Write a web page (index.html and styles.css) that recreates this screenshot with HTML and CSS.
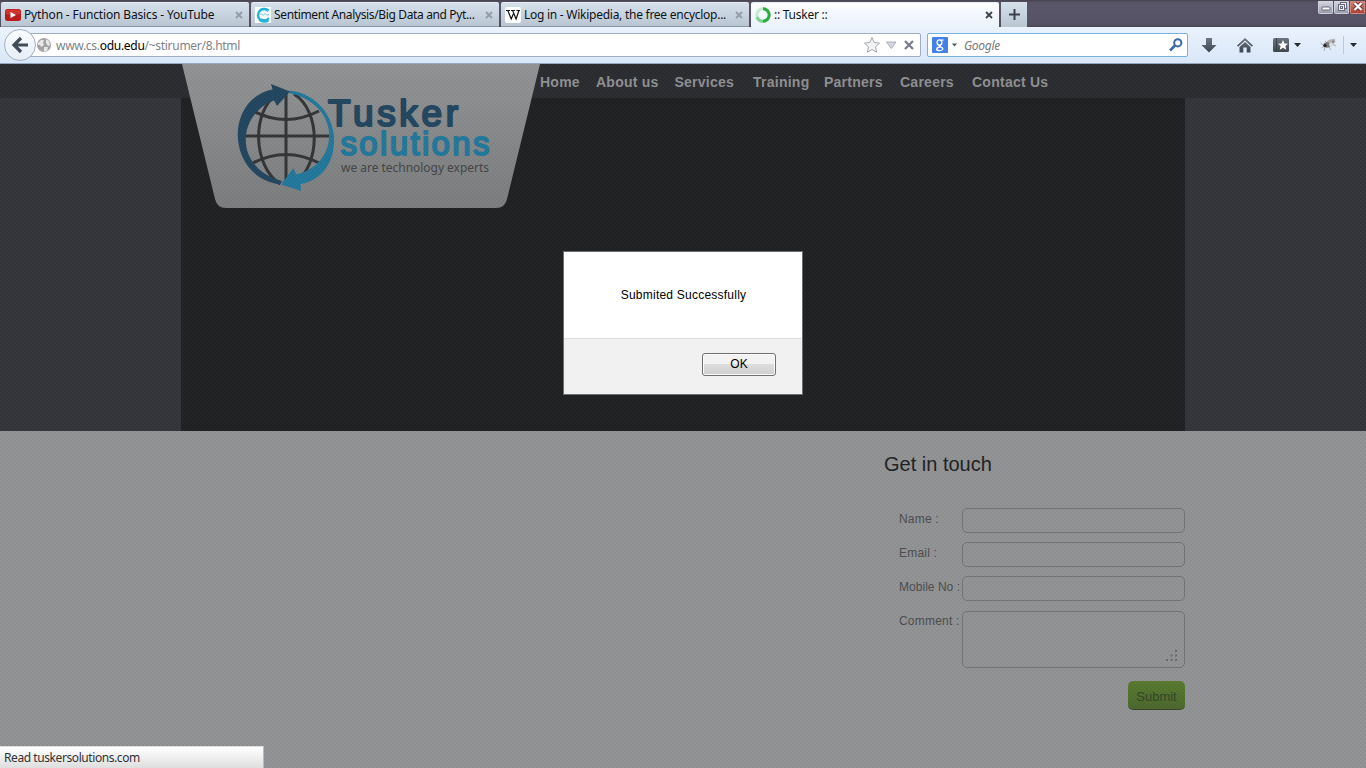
FILE: index.html
```html
<!DOCTYPE html>
<html lang="en">
<head>
<meta charset="utf-8">
<title>:: Tusker ::</title>
<link rel="stylesheet" href="styles.css">
</head>
<body>
<div class="browser">
  <div class="tabs">
    <div class="tab">
      <svg class="fav" width="16" height="16"><rect y="2" width="16" height="12" rx="2.5" fill="#b81c1c"/><rect x=".5" y="2.5" width="15" height="5" rx="2" fill="#cf3431"/><path d="M5.5 5v6l5.5-3z" fill="#fff"/></svg>
      <span class="title t1">Python - Function Basics - YouTube</span>
      <svg class="x" width="8" height="8"><path d="M1 1l6 6M7 1L1 7"/></svg>
    </div>
    <div class="tab">
      <svg class="fav" width="16" height="16"><rect width="16" height="16" fill="#fff"/><path d="M13.500 3.500A6.300 6.300 0 1 0 13.500 13" fill="none" stroke="#20b3d8" stroke-width="2.500"/><path d="M5 3q4-3 8 1" fill="none" stroke="#20b3d8" stroke-width="2"/><path d="M5 7.500c2-2 2 2 4 0s2 2 5 0" fill="none" stroke="#55bfd5"/><path d="M6 12q4 3 8-1" fill="none" stroke="#20b3d8" stroke-width="2"/></svg>
      <span class="title t2">Sentiment Analysis/Big Data and Pyt...</span>
      <svg class="x" width="8" height="8"><path d="M1 1l6 6M7 1L1 7"/></svg>
    </div>
    <div class="tab">
      <svg class="fav" width="16" height="16"><rect width="16" height="16" rx="2" fill="#fff"/><path d="M1 3.500h4M6 3.500h4M11.500 3.500h3.500M3 4l3.200 8L8.300 7M7.800 4l3.300 8 2.600-8" fill="none" stroke="#111" stroke-width="1.200"/></svg>
      <span class="title t3">Log in - Wikipedia, the free encyclop...</span>
      <svg class="x" width="8" height="8"><path d="M1 1l6 6M7 1L1 7"/></svg>
    </div>
    <div class="tab active">
      <svg class="fav" width="16" height="16" fill="none" stroke-width="3"><circle cx="8" cy="8" r="6.200" stroke="#c6ead0"/><path d="M2 10A6.200 6.200 0 0 0 8 14.200" stroke="#80d292"/><path d="M8 1.800A6.200 6.200 0 0 1 8 14.200" stroke="#28ae3a"/></svg>
      <span class="title t4">:: Tusker ::</span>
      <svg class="x" width="8" height="8"><path d="M1 1l6 6M7 1L1 7"/></svg>
    </div>
    <div class="newtab"><svg width="11" height="11"><path d="M5.500 0v11M0 5.500h11" stroke="#3b4049" stroke-width="2"/></svg></div>
    <div class="winbtns">
      <span class="wb"><svg width="14" height="12"><rect x="3" y="6" width="8" height="3" rx="1" fill="#fff" stroke="#66697c"/></svg></span>
      <span class="wb"><svg width="14" height="12" fill="#eee" stroke="#66697c"><rect x="5.500" y="1.500" width="6" height="6"/><rect x="3.500" y="3.500" width="6" height="6"/><rect x="5.500" y="5.500" width="2" height="2"/></svg></span>
      <span class="wb close"><svg width="14" height="12"><path d="M3.500 2l7 7M10.500 2l-7 7" stroke="#6b3038" stroke-width="4"/><path d="M3.500 2l7 7M10.500 2l-7 7" stroke="#fff" stroke-width="2.300"/></svg></span>
    </div>
  </div>
  <div class="toolbar">
    <div class="back"><svg width="18" height="18" fill="none" stroke="#414c58" stroke-width="3.200"><path d="M17 9H3.500M10 2L3 9l7 7"/></svg></div>
    <div class="url">
      <svg width="14" height="14"><circle cx="7" cy="7" r="7" fill="#a2a2a2"/><path d="M1 5l3-3 3 0-1 3 1 2-3 2-1-2-2 0zM9 1l3 2 1 4-2 1-2-3zM7 9l4 0-1 4-3 1z" fill="#e7e7e7"/></svg>
      <span class="addr">www.cs.<b>odu.edu</b>/~stirumer/8.html</span>
      <svg class="urlicons" width="56" height="18"><path d="M9 1.500l2.200 5 5.300.6-4 3.700 1.100 5.400L9 13.500l-4.600 2.700 1.100-5.400-4-3.700 5.300-.6z" fill="#f4f4f4" stroke="#a1a6ac"/><path d="M23.500 6h9.500l-4.750 6.500z" fill="#d4d8e0" stroke="#9aa0ab" stroke-width=".8"/><path d="M42 5l8 8M50 5l-8 8" stroke="#747c87" stroke-width="2.200"/></svg>
    </div>
    <div class="search">
      <svg width="27" height="16"><rect width="16" height="16" rx="1" fill="#4580e8"/><g fill="none" stroke="#fff" stroke-width="1.300"><ellipse cx="7.500" cy="5.500" rx="2.400" ry="2.700"/><path d="M9 3.300l2.500-.4M8.500 8q-2 1 .5 2t1.500 2.500q-1 1.500-4 1T5 11.500Q5.500 10 8.500 10"/></g><path d="M20 6.500h5l-2.500 3z" fill="#555"/></svg>
      <span class="hint">Google</span>
      <svg class="lens" width="14" height="14" fill="none" stroke="#386ba6"><circle cx="8.800" cy="4.800" r="3.600" stroke-width="2"/><path d="M6 7.500L1 12.500" stroke-width="2.500"/></svg>
    </div>
    <svg class="tools" width="178" height="34" viewBox="1188 28 178 34">
      <defs><linearGradient id="steel" x2="0" y2="1"><stop stop-color="#6c7680"/><stop offset="1" stop-color="#3e4751"/></linearGradient></defs>
      <g fill="url(#steel)"><path d="M1206 38h6v7h4.500l-7.500 7.500-7.500-7.500h4.500z"/><path d="M1237 45.500l8-7.500 8 7.500-1.200 1.200L1245 40.500l-6.800 6.200zM1239.500 47l5.500-5 5.500 5v5.500h-3.800v-5h-3.400v5h-3.800z"/><rect x="1273" y="38" width="16" height="14" rx="1.500"/></g>
      <path d="M1276.500 38v14" stroke="#38424b"/><path d="M1283 40l1.500 3.400 3.500.4-2.600 2.300.8 3.600-3.200-1.900-3.200 1.900.8-3.600-2.600-2.300 3.500-.4z" fill="#fff"/>
      <path d="M1294 43h7l-3.500 4zM1350 43h7l-3.500 4z" fill="#252b33"/>
      <path d="M1343.500 36v18" stroke="#c0c8d2"/>
      <g stroke="#a8acb1" fill="none"><path d="M1320.500 43l4 3-3 2M1325 47l-1 4M1329 47l2 3M1332 44l4 2M1327 43l-2-2M1332 41l3-2"/></g><ellipse cx="1331" cy="42" rx="4.500" ry="2.700" fill="#b5b4ac" transform="rotate(-20 1331 42)"/><ellipse cx="1327" cy="45" rx="3.500" ry="2.800" fill="#777a7c"/><circle cx="1325" cy="45.500" r="1.600" fill="#222"/><circle cx="1331" cy="44.500" r="2" fill="#ddd"/><circle cx="1333" cy="41.500" r="1" fill="#777"/>
    </svg>
  </div>
</div>
<main class="page">
  <header class="nav"><nav><a class="n1">Home</a><a class="n2">About us</a><a class="n3">Services</a><a class="n4">Training</a><a class="n5">Partners</a><a class="n6">Careers</a><a class="n7">Contact Us</a></nav></header>
  <section class="hero"><div class="stage"></div></section>
  <section class="contact">
    <form class="form">
      <h2>Get in touch</h2>
      <div class="row"><label>Name :</label><span class="field"></span></div>
      <div class="row"><label>Email :</label><span class="field"></span></div>
      <div class="row"><label class="tight">Mobile No :</label><span class="field"></span></div>
      <div class="row big"><label>Comment :</label><span class="field area"><svg width="14" height="14" fill="#686a6b"><path d="M10 1h2v2h-2zM5.500 5.500h2v2h-2zM10 5.500h2v2h-2zM1 10h2v2H1zM5.500 10h2v2h-2zM10 10h2v2h-2z"/></svg></span></div>
      <div class="submit">Submit</div>
    </form>
  </section>
  <svg class="logo" width="360" height="145" viewBox="181 64 360 145">
    <defs><linearGradient id="plate" x2="0" y2="1"><stop stop-color="#929394"/><stop offset="1" stop-color="#7c7d7e"/></linearGradient></defs>
    <path d="M182 64H540L507 199Q505 208 496 208H226Q217 208 215 199Z" fill="url(#plate)"/>
    <g fill="none" stroke="#333536" stroke-width="3"><path d="M286 92v92M243 136h86M253 111q33 17 66 0M253 163q33-17 66 0"/><path d="M277 94C252 111 252 165 280 184M294 94C321 111 321 165 294 184"/></g>
    <path d="M271 84L290 91.500 277 106 274 100.500C237 114 233 168 282 181L280 184.500C226 177 224 99 272.500 89.500Z" fill="#23465f"/>
    <path d="M290 90.500C347 99 347 177 300.500 184L301 191 281 184.500 293.500 168 296 174.500C340 165 343 105 289 93Z" fill="#22789b"/>
    <g class="brand"><text x="328" y="126" font-size="37" textLength="130" lengthAdjust="spacing" fill="#23465f" stroke="#23465f" stroke-width="2.200">Tusker</text><text x="340.500" y="154.500" font-size="33" textLength="149" lengthAdjust="spacing" fill="#22789b" stroke="#22789b" stroke-width="1.900">solutions</text></g>
    <text class="motto" x="341" y="172" font-size="12.500" textLength="148" lengthAdjust="spacingAndGlyphs" fill="#434546">we are technology experts</text>
  </svg>
  <div class="hatch"></div>
  <div class="dialog"><div class="msg"><span>Submited Successfully</span></div><div class="actions"><div class="ok">OK</div></div></div>
  <div class="status"><span>Read tuskersolutions.com</span></div>
</main>
</body>
</html>
```
FILE: styles.css
```css
* { box-sizing: border-box; }
body { margin: 0; width: 1366px; height: 768px; overflow: hidden; font-family: "Liberation Sans", Arial, sans-serif; }
svg { display: block; flex: none; }
.browser { height: 64px; font-family: "Noto Sans", "Open Sans", sans-serif; color: #101317; }
.tabs { height: 27px; display: flex; background: linear-gradient(#484551, #59566a 3px, #555264 24px, #484654); align-items: flex-end; padding-left: 1px; }
.tab { width: 248px; margin-right: 2px; height: 25px; padding: 0 6px 0 4px; display: flex; align-items: center; background: linear-gradient(#d5e0eb, #b9c6d2); border-top: 1px solid #e7eff6; border-radius: 2px 2px 0 0; border-bottom: 1px solid #8995a5; }
.active { background: linear-gradient(#fcfdff, #eaf2fc); border-bottom: 0; }
.title { font-size: 12px; line-height: 16px; margin-left: 3px; white-space: nowrap; }
.t1 { letter-spacing: -.15px; }
.t2 { letter-spacing: -.36px; }
.t3 { letter-spacing: -.26px; }
.t4 { letter-spacing: -.25px; }
.x { margin-left: auto; stroke: #939ca5; stroke-width: 1.8; }
.active .x { stroke: #3e434b; }
.newtab { width: 26px; height: 25px; display: flex; align-items: center; justify-content: center; background: linear-gradient(#d5e0eb, #b9c6d2); }
.winbtns { display: flex; margin-left: auto; align-self: flex-start; padding: 1px 1px 0 0; gap: 1px; }
.wb { width: 15px; height: 13px; background: linear-gradient(#d6d8e3, #9a9dae); border: 1px solid #cccedb; border-top: 0; border-radius: 0 0 2px 2px; }
.close { background: linear-gradient(#d98478, #b6402f); border-color: #cf8a84; }
.toolbar { height: 37px; display: flex; align-items: center; background: linear-gradient(#eaf2fc, #d9e7f8); border-bottom: 1px solid #95a7be; padding-left: 4px; }
.back { width: 32px; height: 32px; border: 1px solid #a3afc1; border-radius: 50%; background: linear-gradient(#fbfdff, #e6eef8); display: flex; align-items: center; justify-content: center; z-index: 1; flex: none; }
.url { width: 893px; margin-left: -8px; height: 24px; border: 1px solid #9eabc0; border-radius: 0 2px 2px 0; background: #fff; display: flex; align-items: center; padding: 0 1px 0 8px; flex: none; }
.addr { font-size: 12px; color: #808286; margin-left: 5px; letter-spacing: -.29px; white-space: nowrap; }
.addr b { color: #000; font-weight: 400; }
.urlicons { margin-left: auto; }
.search { width: 261px; height: 24px; margin-left: 6px; border: 1px solid #74b3df; border-radius: 2px; background: #fff; display: flex; align-items: center; padding: 0 4px; flex: none; }
.hint { font-size: 12px; font-style: italic; color: #77797c; margin-left: 5px; letter-spacing: -.3px; }
.lens { margin-left: auto; }
.page { position: relative; height: 704px; }
.nav { height: 34px; background: #2b2c30; padding-left: 540px; }
.nav nav { display: flex; padding-top: 9px; font: bold 14px/18px "Liberation Sans", Arial, sans-serif; color: #8f9092; white-space: nowrap; letter-spacing: .25px; }
.n1 { width: 56px; } .n2 { width: 78.5px; } .n3 { width: 78.5px; } .n4 { width: 71px; } .n5 { width: 76px; } .n6 { width: 72px; }
.hero { height: 333px; background: #34353a; padding: 0 181px; }
.stage { height: 333px; background: #202122; }
.contact { height: 337px; background: #929394; padding: 20px 181px 0 884px; }
.form { margin: 0; color: #4b4c4e; font-size: 12px; }
h2 { font-size: 20px; font-weight: 400; line-height: 26px; color: #1f2123; margin: 0 0 31px; }
.row { display: flex; justify-content: space-between; height: 34px; padding-left: 15px; letter-spacing: .2px; }
.row label { line-height: 22px; white-space: nowrap; }
.row .tight { letter-spacing: .03px; }
.field { width: 223px; height: 25px; border: 1px solid #727476; border-radius: 5px; flex: none; }
.row.big { height: 73px; }
.area { height: 57px; margin-top: 1px; display: flex; align-items: flex-end; justify-content: flex-end; padding: 0 5px 4px 0; }
.submit { width: 57px; height: 29px; border-radius: 5px; margin-left: auto; margin-top: -2px; line-height: 31px; text-align: center; font-size: 13px; color: #324525; background: linear-gradient(#597b2f, #4c672d); border-bottom: 1px solid #34472a; }
.logo { position: absolute; left: 181px; top: 0; }
.brand { font-family: "Liberation Sans", Arial, sans-serif; stroke-linejoin: round; }
.motto { font-family: "Noto Sans", sans-serif; }
.hatch { position: absolute; inset: 0; background: repeating-conic-gradient(rgba(0,0,0,.03) 0 25%, rgba(255,255,255,.015) 0 50%) 0 0 / 4px 4px; }
.dialog { position: absolute; left: 563px; top: 187px; width: 240px; height: 144px; border: 1px solid #6d6e70; background: #f1f1f1; font-size: 12px; color: #000; }
.msg { height: 87px; background: #fff; border-bottom: 1px solid #dfdfdf; display: flex; justify-content: center; padding: 36px 0 0 1px; letter-spacing: .23px; }
.actions { display: flex; justify-content: flex-end; padding: 14px 26px 0 0; }
.ok { width: 74px; height: 23px; border: 1px solid #707070; border-radius: 3px; box-shadow: inset 0 0 0 1px #fafafa; background: linear-gradient(#f2f2f2 0 50%, #dddddd 50%, #cfcfcf); line-height: 21px; text-align: center; font-size: 12px; }
.status { position: absolute; left: 0; bottom: 0; width: 264px; height: 22px; background: linear-gradient(#fff, #dedede); border-right: 1px solid #bbb; border-top: 1px solid #ddd; padding-left: 4px; font: 12px/22px "Noto Sans", sans-serif; color: #333; letter-spacing: -.42px; }
```
